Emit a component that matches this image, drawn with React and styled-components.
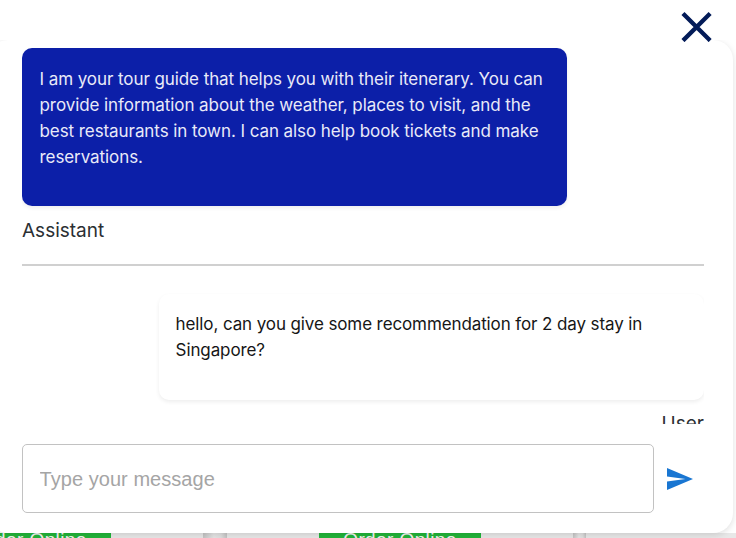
import React from "react";
import styled, { createGlobalStyle } from "styled-components";

const GlobalStyle = createGlobalStyle`
  * { box-sizing: border-box; }
  body { margin: 0; background: #fff; font-family: Inter, "Liberation Sans", sans-serif; }
`;

const Screen = styled.div`
  display: flex;
  flex-direction: column;
  width: 736px;
  height: 538px;
  overflow: hidden;
`;

const TopBar = styled.header`
  display: flex;
  justify-content: flex-end;
  flex: none;
  height: 40px;
  padding: 11px 24px 0 0;
`;

const CloseButton = styled.button`
  flex: none;
  width: 31px;
  height: 31px;
  padding: 0;
  border: 0;
  background: none;
  z-index: 1;
  svg { display: block; }
`;

const Panel = styled.main`
  display: flex;
  flex-direction: column;
  flex: none;
  width: 745px;
  height: 493px;
  margin-left: -12px;
  padding: 8px 29px 20px 34px;
  border-radius: 20px;
  background: #fff;
  box-shadow: 0 2px 7px rgba(0, 0, 0, 0.13);
  clip-path: inset(0 -8px -8px 0);
`;

const Messages = styled.section`
  flex: none;
  height: 376px;
  overflow: hidden;
`;

const Bubble = styled.div`
  width: 545px;
  height: ${(p) => (p.$user ? 106 : 158)}px;
  margin-left: ${(p) => (p.$user ? "auto" : 0)};
  padding: ${(p) => (p.$user ? "17px 10px 0 16.6px" : "18px 10px 0 17.5px")};
  border-radius: 10px;
  background: ${(p) => (p.$user ? "#fff" : "#0c1fa8")};
  color: ${(p) => (p.$user ? "#161616" : "#e9eaf8")};
  box-shadow: 0 2px 4px rgba(0, 0, 0, 0.07);
  font-size: 17px;
  line-height: 26px;
  letter-spacing: ${(p) => p.$tracking}px;
`;

const Line = styled.span`
  display: block;
  white-space: nowrap;
`;

const Author = styled.div`
  padding-top: ${(p) => (p.$user ? 12 : 13)}px;
  height: ${(p) => (p.$user ? 40 : 58)}px;
  font-size: 19px;
  line-height: 24px;
  color: #2b2f33;
  text-align: ${(p) => (p.$user ? "right" : "left")};
`;

const Divider = styled.hr`
  height: 2px;
  margin: 0 0 28px;
  border: 0;
  background: #d0d0d0;
`;

const Composer = styled.form`
  display: flex;
  align-items: center;
  margin-top: 20px;
`;

const MessageInput = styled.input`
  width: 632px;
  height: 69px;
  padding: 1px 16.5px 0;
  border: 1.5px solid #c2c2c2;
  border-radius: 5px;
  outline: 0;
  background: #fff;
  font-family: "Liberation Sans", Arial, sans-serif;
  font-size: 20px;
  letter-spacing: 0.05px;
  &::placeholder { color: #a5a5a5; opacity: 1; }
`;

const SendButton = styled.button`
  width: 26px;
  height: 22px;
  margin-left: 12.5px;
  padding: 0;
  border: 0;
  background: none;
  svg { display: block; }
`;

const StoreStrip = styled.footer`
  display: flex;
  flex: none;
  height: 5px;
  background: #e8e8e8;
  overflow: hidden;
`;

const OrderLink = styled.div`
  flex: none;
  width: 162px;
  height: 24px;
  margin-left: ${(p) => p.$offset}px;
  background: #22b53a;
  color: #f4f4f4;
  font-family: "Liberation Sans", Arial, sans-serif;
  font-size: 19px;
  line-height: 14px;
  letter-spacing: 0.4px;
  text-align: center;
  white-space: nowrap;
`;

const Gutter = styled.div`
  flex: none;
  width: ${(p) => p.$width}px;
  margin-left: ${(p) => p.$offset}px;
  background: linear-gradient(90deg, #c4c4c4, #e6e6e6 45%, #e0e0e0 75%, #c4c4c4);
`;

export default function App() {
  return (
    <Screen>
      <GlobalStyle />
      <TopBar>
        <CloseButton aria-label="Close">
          <svg width="31" height="31" viewBox="0 0 31 31">
            <path d="M3.5 4 27.6 28.1M27.6 4 3.5 28.1" fill="none" stroke="#031b58" strokeWidth="4.3" strokeLinecap="square" />
          </svg>
        </CloseButton>
      </TopBar>
      <Panel>
        <Messages>
          <Bubble $tracking={-0.075}>
            <Line>I am your tour guide that helps you with their itenerary. You can</Line>
            <Line>provide information about the weather, places to visit, and the</Line>
            <Line>best restaurants in town. I can also help book tickets and make</Line>
            <Line>reservations.</Line>
          </Bubble>
          <Author>Assistant</Author>
          <Divider />
          <Bubble $user $tracking={-0.11}>
            <Line>hello, can you give some recommendation for 2 day stay in</Line>
            <Line>Singapore?</Line>
          </Bubble>
          <Author $user>User</Author>
        </Messages>
        <Composer>
          <MessageInput placeholder="Type your message" />
          <SendButton type="button" aria-label="Send">
            <svg width="26" height="22" viewBox="0 0 26 22">
              <path d="M0 0 26 11 0 22V13.5L18.5 11 0 8.5Z" fill="#1976d2" />
            </svg>
          </SendButton>
        </Composer>
      </Panel>
      <StoreStrip>
        <OrderLink $offset={-51}>Order Online</OrderLink>
        <Gutter $width={24} $offset={92} />
        <OrderLink $offset={92}>Order Online</OrderLink>
        <Gutter $width={13} $offset={92} />
      </StoreStrip>
    </Screen>
  );
}
